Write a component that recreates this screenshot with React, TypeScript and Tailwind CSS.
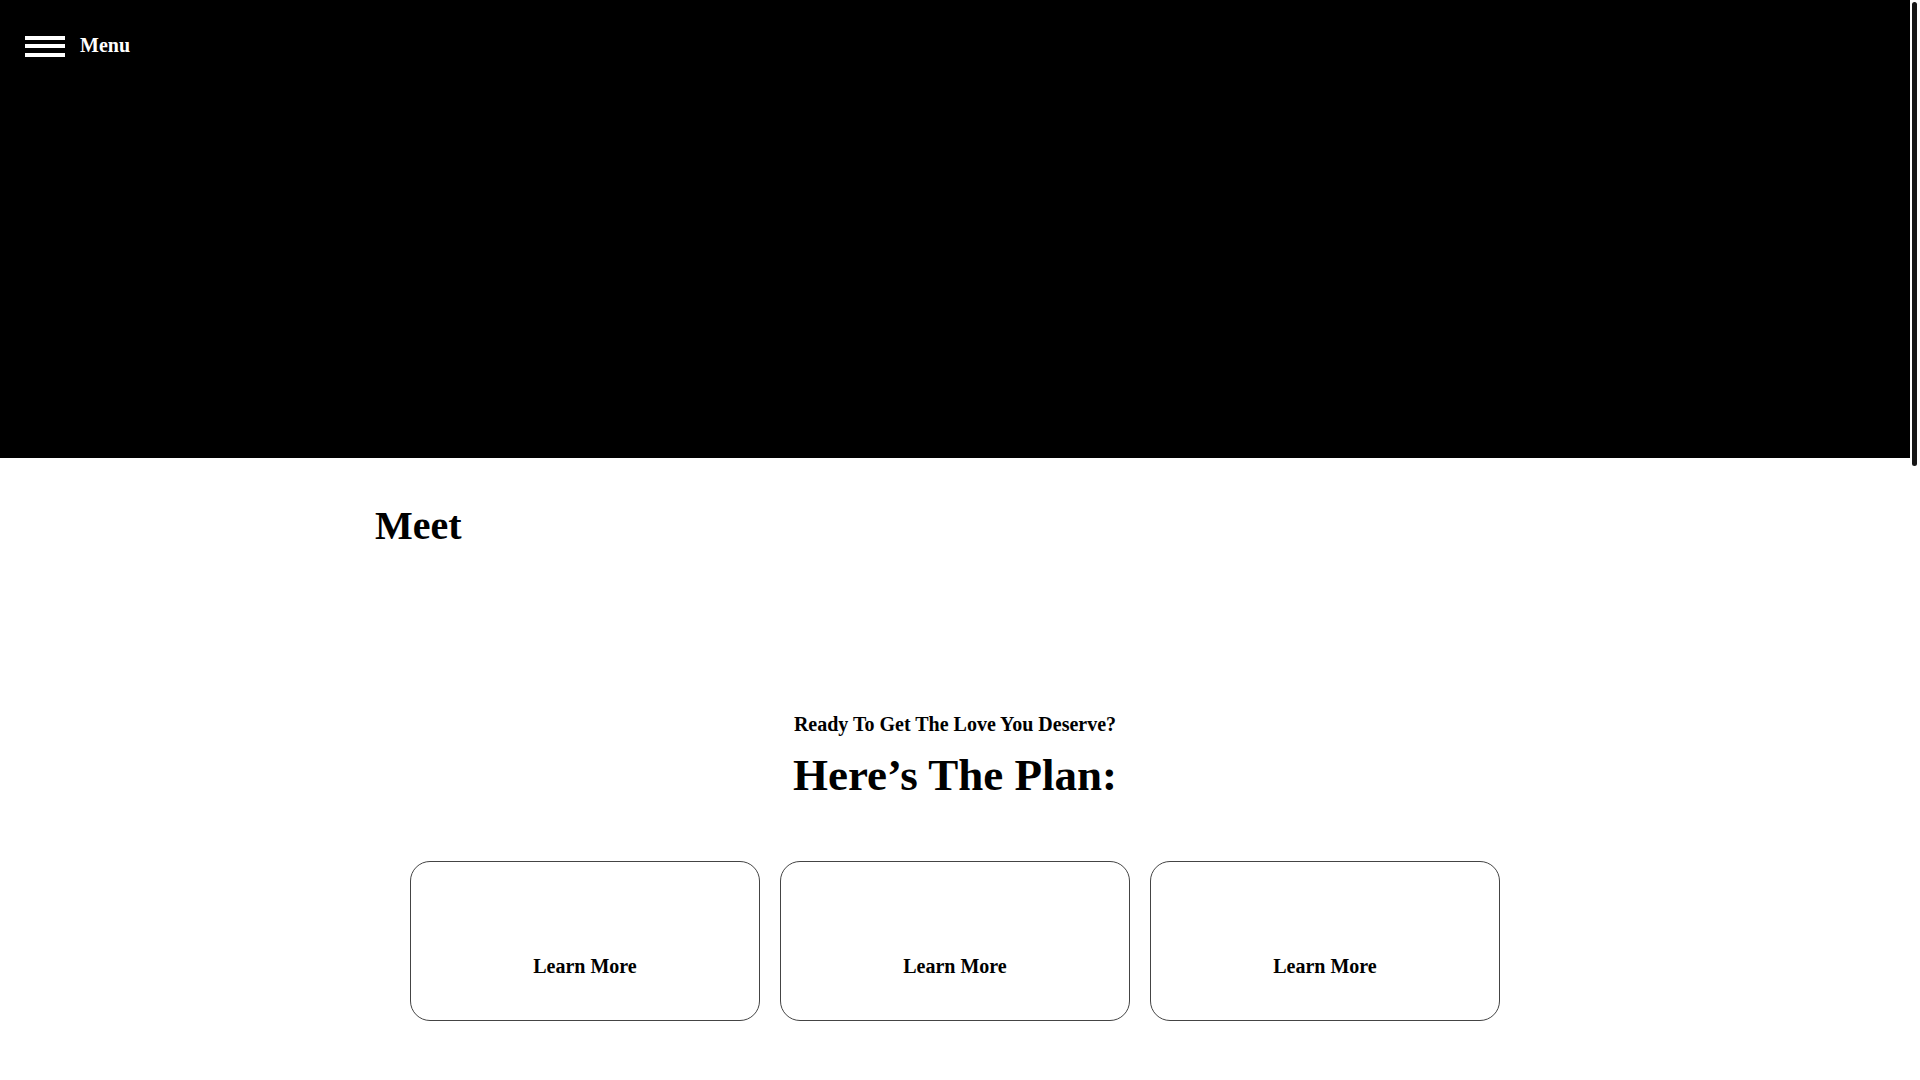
import * as React from "react"

const plan = ["Learn More", "Learn More", "Learn More"]

export default function App() {
  return (
    <div className="flex min-h-screen bg-white text-black [font-family:'Liberation_Serif','Times_New_Roman',serif]">
      <div className="flex-1">
        {/* Hero */}
        <header className="h-[458px] w-full bg-black">
          <button type="button" className="flex items-start gap-[15px] pl-[25px] pt-[36px] text-white">
            <span className="flex flex-col gap-[4.33px]">
              <span className="block h-[4px] w-[40px] bg-white" />
              <span className="block h-[4px] w-[40px] bg-white" />
              <span className="block h-[4px] w-[40px] bg-white" />
            </span>
            <span className="-mt-[3px] text-[20px] font-bold leading-[1.2]">Menu</span>
          </button>
        </header>

        <main className="mx-auto w-[1160px] pb-[50px]">
          <h2 className="mt-[44px] text-[40px] font-bold leading-[1.2]">Meet</h2>

          {/* Plan */}
          <section className="flex flex-col items-center">
            <p className="mt-[162px] text-[20px] font-bold leading-[1.2]">Ready To Get The Love You Deserve?</p>
            <h2 className="mt-[12px] text-[45px] font-bold leading-[1.2]">Here’s The Plan:</h2>

            <div className="mt-[59px] grid grid-cols-3 gap-[20px]">
              {plan.map((label, i) => (
                <a
                  key={i}
                  href="#"
                  className="flex h-[160px] w-[350px] flex-col items-center justify-end rounded-[20px] border border-[#444] pb-[42px]"
                >
                  <span className="text-[20px] font-bold leading-[1.2]">{label}</span>
                </a>
              ))}
            </div>
          </section>
        </main>
      </div>

      {/* scrollbar */}
      <aside className="w-[10px] shrink-0 bg-white">
        <div className="ml-[2px] mt-[2px] h-[464px] w-[5px] rounded-full bg-[#161616]" />
      </aside>
    </div>
  )
}
